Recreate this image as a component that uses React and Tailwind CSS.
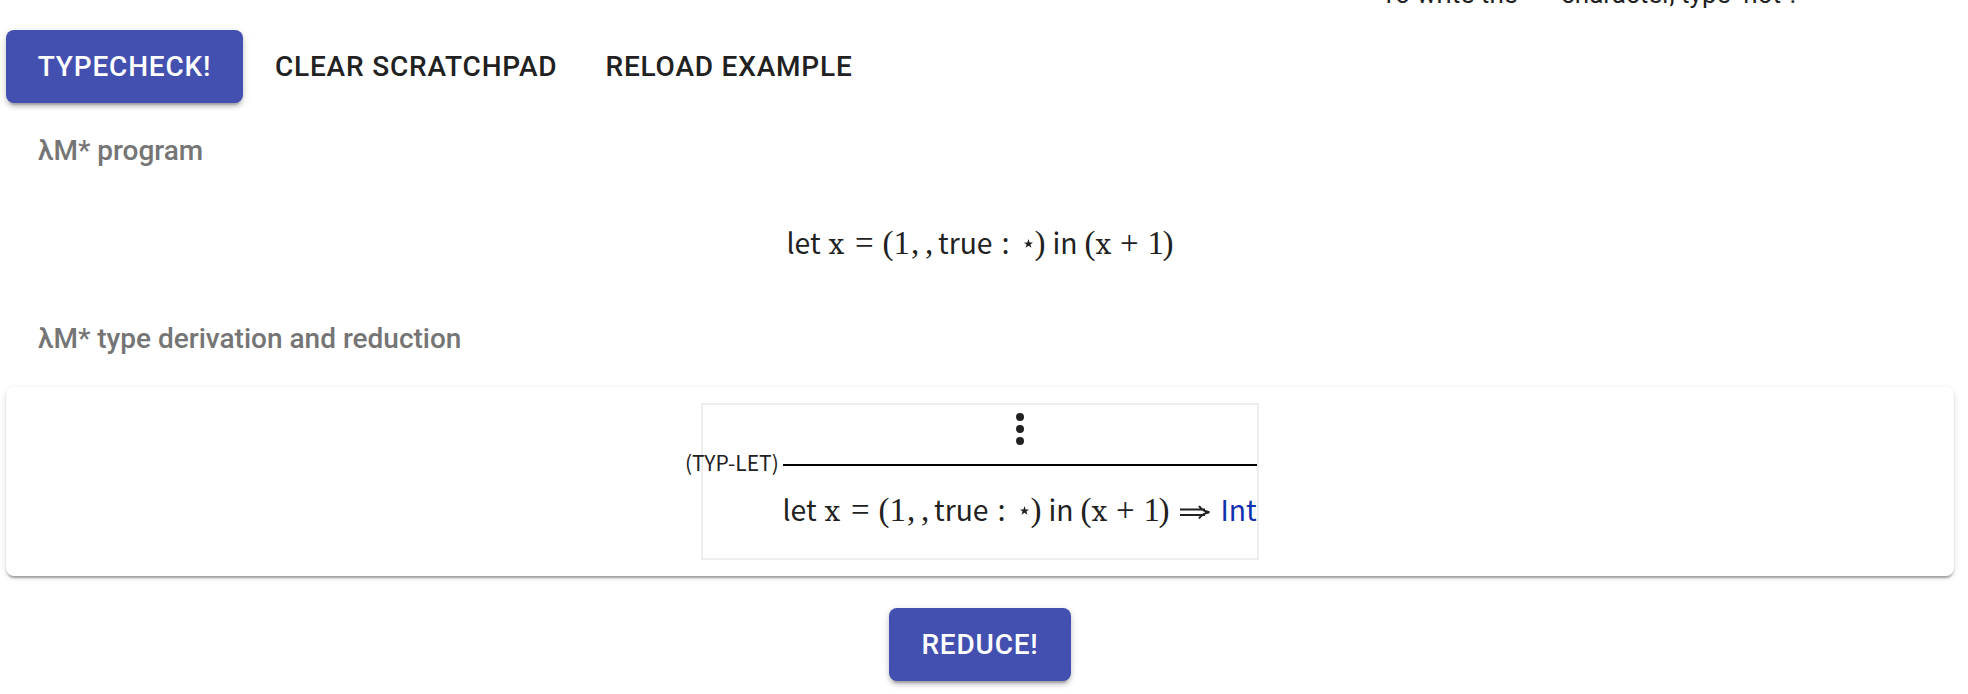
const BUTTON_SHADOW =
  "shadow-[0_6px_2px_-4px_rgba(0,0,0,0.2),0_4px_4px_0_rgba(0,0,0,0.14),0_2px_10px_0_rgba(0,0,0,0.12)]";
const BUTTON_TEXT =
  "h-[73px] rounded-lg text-[28px] leading-[49px] font-medium tracking-[0.8px] whitespace-nowrap uppercase";
const SANS = "shrink-0 font-['Noto_Sans_CJK_SC',sans-serif] text-[28.3px]";
const SERIF = "shrink-0 font-['Liberation_Serif',serif] text-[33px]";
const SLAB = "shrink-0 font-['DejaVu_Serif',serif] text-[28px]";

function Contained({ children, className }) {
  return (
    <button className={`${BUTTON_TEXT} ${BUTTON_SHADOW} bg-[#4350af] text-center text-white ${className}`}>
      {children}
    </button>
  );
}

function Flat({ children, className }) {
  return <button className={`${BUTTON_TEXT} text-left text-[#212121] ${className}`}>{children}</button>;
}

function Heading({ children }) {
  return (
    <h2 className="pl-8 text-[28px] leading-[44px] font-medium text-[#757575]">{children}</h2>
  );
}

function Expression() {
  return (
    <>
      <span className={`${SANS} w-[42px]`}>let</span>
      <span className={`${SLAB} w-[26.5px]`}>x</span>
      <span className={`${SERIF} w-[27.5px]`}>=</span>
      <span className={`${SERIF} w-[11px]`}>(</span>
      <span className={`${SERIF} w-[17.5px]`}>1</span>
      <span className={`${SERIF} w-[14px]`}>,</span>
      <span className={`${SERIF} w-[13px]`}>,</span>
      <span className={`${SANS} w-[63px]`}>true</span>
      <span className={`${SERIF} w-[22.5px]`}>:</span>
      <span className="flex w-[11px] shrink-0 items-center self-stretch pt-[2px]">
        <svg className="h-[9px] w-[9px]" viewBox="0 0 24 24" fill="currentColor">
          <path d="M12 0l3 9h9l-7 5.500 3 9-8-5.500-8 5.500 3-9-7-5.500h9z" />
        </svg>
      </span>
      <span className={`${SERIF} w-[18px]`}>)</span>
      <span className={`${SANS} w-[32px]`}>in</span>
      <span className={`${SERIF} w-[11px]`}>(</span>
      <span className={`${SLAB} w-[24.5px]`}>x</span>
      <span className={`${SERIF} w-[27.5px]`}>+</span>
      <span className={`${SERIF} w-[15px]`}>1</span>
      <span className={`${SERIF} w-[21.5px]`}>)</span>
    </>
  );
}

export default function App() {
  return (
    <main className="flex h-[694px] w-[1968px] flex-col overflow-hidden bg-white pr-[14px] pl-[6px] font-['Roboto',sans-serif] text-[#212121]">
      <div className="flex h-[30px] shrink-0 pl-[1375px]">
        <p className="-mt-[26px] flex h-10 text-[26px] leading-10 tracking-[0.1px] whitespace-nowrap">
          <span className="w-[180px]">To write the ¬</span>
          <span className="w-[120px]">character,</span>
          <span className="w-[54px]">type</span>
          <span>"not".</span>
        </p>
      </div>
      <div className="flex h-[73px] shrink-0">
        <Contained className="w-[237px]">Typecheck!</Contained>
        <Flat className="ml-8 w-[330.5px]">Clear scratchpad</Flat>
        <Flat>Reload example</Flat>
      </div>
      <div className="mt-[26px]">
        <Heading>λM* program</Heading>
      </div>
      <div className="mt-11 flex h-[50px] items-baseline pl-[780.5px] leading-[50px]">
        <Expression />
      </div>
      <div className="mt-[50px]">
        <Heading>λM* type derivation and reduction</Heading>
      </div>
      <section className="mt-[26px] flex h-[189px] shrink-0 items-center justify-center rounded-lg bg-white shadow-[0_4px_2px_-2px_rgba(0,0,0,0.2),0_2px_2px_0_rgba(0,0,0,0.14),0_2px_6px_0_rgba(0,0,0,0.12)]">
        <div className="flex h-[157px] w-[558px] flex-col border-2 border-[#eee]">
          <div className="flex h-[48px] justify-center pt-2 pl-[80px]">
            <svg className="h-8 w-2" viewBox="0 0 8 32" fill="currentColor">
              <circle cx="4" cy="4" r="4" />
              <circle cx="4" cy="16" r="4" />
              <circle cx="4" cy="28" r="4" />
            </svg>
          </div>
          <div className="-ml-[18px] flex h-6 items-center">
            <span className="mb-[6px] w-[98px] shrink-0 font-['Noto_Sans_CJK_SC',sans-serif] text-[21px] leading-6 whitespace-nowrap">
              (TYP-LET)
            </span>
            <span className="h-0.5 flex-1 bg-black" />
          </div>
          <div className="mt-[7px] flex h-[50px] items-baseline pl-[79.5px] leading-[50px]">
            <Expression />
            <svg className="mt-[21px] h-[14px] w-[31px] shrink-0 self-start" viewBox="0 0 31 14" fill="none" stroke="currentColor" strokeWidth="2">
              <path d="M0 4.500h25M0 10h25M19 1c2 3 5 5.500 10.500 6.250c-5.500 0.750-8.500 3.250-10.500 6.250" />
            </svg>
            <span className={`${SANS} ml-[9.5px] text-[#102fb0]`}>Int</span>
          </div>
        </div>
      </section>
      <div className="mt-8 flex h-[73px] shrink-0 justify-center">
        <Contained className="w-[182px]">Reduce!</Contained>
      </div>
    </main>
  );
}
